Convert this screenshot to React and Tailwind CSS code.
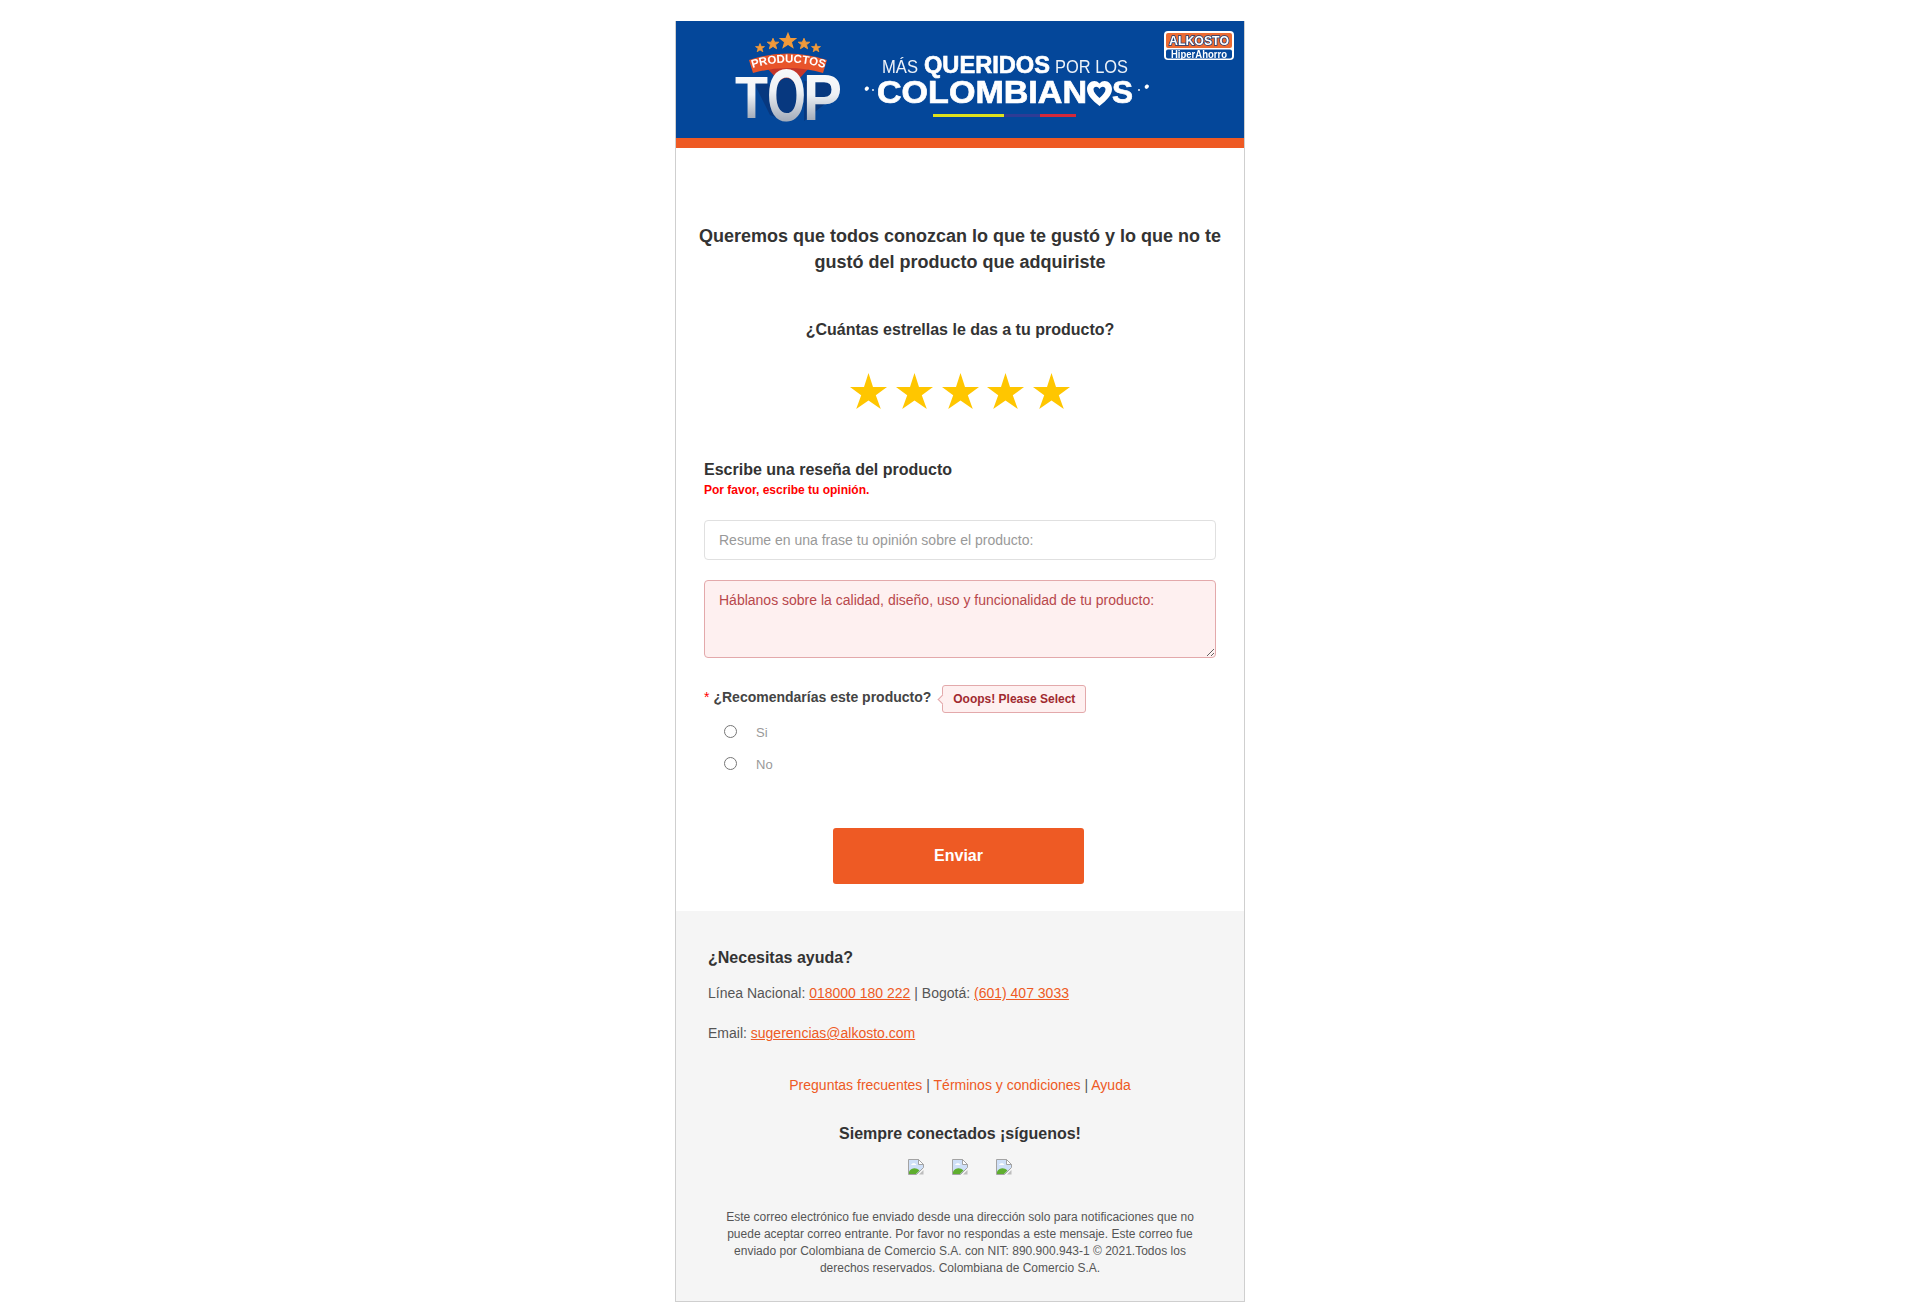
import React from "react";

const font = { fontFamily: "'Liberation Sans', Arial, sans-serif" };

function Star() {
  return (
    <svg viewBox="0 0 37 36" className="w-[37px] h-[36px]" fill="#ffc600">
      <polygon points="18.500,0 23,14 37,14 25.800,22.300 30.800,36 18.500,27.500 6.200,36 11.200,22.300 0,14 14,14" />
    </svg>
  );
}

// chrome's broken image glyph
function BrokenImage() {
  return (
    <svg viewBox="0 0 16 16" className="w-4 h-4">
      <path d="M0.5 0.5H10.5L15.5 5.5V8.500L8.500 15.5H0.5Z" fill="#cfe0f8" stroke="#a3a3a3" />
      <path d="M10.5 0.5V5.5H15.5Z" fill="#fff" stroke="#a3a3a3" />
      <path d="M3 6C4 3.500 7.500 3.500 8.500 6Z" fill="#fff" />
      <path d="M1 15V12.500C4 8.500 8 8.500 11.500 11.500L8 15Z" fill="#5fae2e" />
      <path d="M15.5 11V15.5H11Z" fill="#bdbdbd" />
    </svg>
  );
}

function BannerArt() {
  const textFont = "'Liberation Sans', Arial, sans-serif";
  const smallStar = "0,-6 1.7,-1.9 6,-1.9 2.6,0.8 3.8,5 0,2.5 -3.8,5 -2.6,0.8 -6,-1.9 -1.7,-1.9";
  return (
    <svg viewBox="0 0 568 116" className="w-full h-[116px] block" style={{ filter: "blur(0.45px)" }}>
      <defs>
        <linearGradient id="top" x1="0" y1="0" x2="0" y2="1">
          <stop offset="0" stopColor="#ffffff" />
          <stop offset="0.45" stopColor="#eef1f5" />
          <stop offset="0.8" stopColor="#a4adbb" />
          <stop offset="1" stopColor="#d8dde5" />
        </linearGradient>
        <path id="arc" d="M77 47Q112 36 148 47" />
      </defs>

      {/* productos top logo */}
      {[
        [84, 27, 0.75],
        [97, 23, 0.95],
        [112, 20, 1.25],
        [128, 23, 0.95],
        [140, 27, 0.75],
      ].map(([x, y, s], i) => (
        <polygon key={i} points={smallStar} fill="#f29a3a" stroke="#f29a3a" strokeWidth="1" transform={`translate(${x} ${y}) scale(${s})`} />
      ))}
      <path d="M90 46H134L112 70Z" fill="#c4362a" />
      <path d="M73 39Q112 26 151 39L147 52Q112 42 77 52Z" fill="#e8542a" />
      <text fontFamily={textFont} fontWeight="700" fontSize="11.5" fill="#fff">
        <textPath href="#arc" startOffset="50%" textAnchor="middle">
          PRODUCTOS
        </textPath>
      </text>
      <path d="M78 62H92L112 100L94 94Z" fill="#07387f" />
      <path d="M128 60H155V78L140 90L128 100Z" fill="#07387f" />
      <ellipse cx="110.500" cy="75" rx="12" ry="18" fill="#07387f" />
      <text x="59" y="97" fontFamily={textFont} fontWeight="700" fontSize="59" fill="url(#top)" textLength="33" lengthAdjust="spacingAndGlyphs">
        T
      </text>
      <text x="127" y="99" fontFamily={textFont} fontWeight="700" fontSize="64" fill="url(#top)" textLength="39" lengthAdjust="spacingAndGlyphs">
        P
      </text>
      <text x="91" y="100" fontFamily={textFont} fontWeight="700" fontSize="75" fill="url(#top)" textLength="39" lengthAdjust="spacingAndGlyphs">
        O
      </text>

      {/* headline */}
      <text x="206" y="52" fontFamily={textFont} fontSize="18" fill="#eef2f8" textLength="36" lengthAdjust="spacingAndGlyphs">
        MÁS
      </text>
      <text x="248" y="52" fontFamily={textFont} fontWeight="700" fontSize="23" fill="#fff" stroke="#fff" strokeWidth="0.6" textLength="126" lengthAdjust="spacingAndGlyphs">
        QUERIDOS
      </text>
      <text x="379" y="52" fontFamily={textFont} fontSize="18" fill="#eef2f8" textLength="73" lengthAdjust="spacingAndGlyphs">
        POR LOS
      </text>
      <text x="201" y="82" fontFamily={textFont} fontWeight="700" fontSize="32" fill="#fff" stroke="#fff" strokeWidth="0.7" textLength="210" lengthAdjust="spacingAndGlyphs">
        COLOMBIAN
      </text>
      <path
        d="M423.500 85C416 79 411 74 411 68C411 61 419 57 423.500 62.500C428 57 436 61 436 68C436 74 431 79 423.500 85ZM423.500 77C427 74 429.500 71 429.500 68.500C429.500 65.500 425.500 64.500 423.500 68C421.500 64.500 417.500 65.500 417.500 68.500C417.500 71 420 74 423.500 77Z"
        fill="#fff"
        fillRule="evenodd"
      />
      <text x="436" y="82" fontFamily={textFont} fontWeight="700" fontSize="32" fill="#fff" stroke="#fff" strokeWidth="0.7" textLength="21" lengthAdjust="spacingAndGlyphs">
        S
      </text>
      <path d="M189 67C190 65 192 65 193 67C193 69 191 70 190 70C189 69 188 68 189 67Z" fill="#fff" />
      <circle cx="197" cy="69" r="0.9" fill="#fff" />
      <path d="M469 65C470 63 472 63 473 65C473 67 471 68 470 68C469 67 468 66 469 65Z" fill="#fff" />
      <circle cx="463" cy="69" r="0.9" fill="#fff" />
      <rect x="257" y="93" width="71" height="3" fill="#dfe21c" />
      <rect x="328" y="93" width="36" height="3" fill="#2f3c95" />
      <rect x="364" y="93" width="36" height="3" fill="#d4283a" />

      {/* alkosto badge */}
      <rect x="488" y="10" width="70" height="29" rx="4" fill="#fff" />
      <rect x="490" y="12" width="66" height="15" rx="2" fill="#ec6a32" />
      <rect x="490" y="28.500" width="66" height="9" rx="2" fill="#04479a" />
      <text x="523" y="24" textAnchor="middle" fontFamily={textFont} fontWeight="700" fontSize="12" fill="#fff" stroke="#123a78" strokeWidth="1.4" paintOrder="stroke" textLength="60" lengthAdjust="spacingAndGlyphs">
        ALKOSTO
      </text>
      <text x="523" y="36.500" textAnchor="middle" fontFamily={textFont} fontWeight="700" fontSize="10.500" fill="#fff" textLength="56" lengthAdjust="spacingAndGlyphs">
        HiperAhorro
      </text>
    </svg>
  );
}

export default function App() {
  return (
    <div className="min-h-screen bg-white text-[#333] flex justify-center pt-[21px]" style={font}>
      <div className="w-[570px] h-[1281px] border-x border-b border-[#cfcfcf] flex flex-col">
        {/* Banner */}
        <div className="h-[127px] bg-[#04479a] border-b-[10px] border-[#ee5a24] box-border shrink-0">
          <BannerArt />
        </div>

        {/* Review form */}
        <div className="flex-1 px-[28px] pt-[75px]">
          <h1 className="text-[18px] leading-[26px] font-bold text-center -mx-[6px]">
            Queremos que todos conozcan lo que te gustó y lo que no te gustó del producto que adquiriste
          </h1>
          <p className="mt-[43px] text-[16px] leading-[24px] font-bold text-center">
            ¿Cuántas estrellas le das a tu producto?
          </p>
          <div className="mt-[31px] flex justify-center gap-[8.750px]">
            <Star />
            <Star />
            <Star />
            <Star />
            <Star />
          </div>

          <h2 className="mt-[51px] text-[16px] leading-[20px] font-bold">Escribe una reseña del producto</h2>
          <p className="mt-[1px] text-[12px] leading-[18px] font-bold text-[#ff0000]">
            Por favor, escribe tu opinión.
          </p>

          <input
            placeholder="Resume en una frase tu opinión sobre el producto:"
            className="mt-[21px] block w-full h-[40px] px-[14px] bg-white border border-[#e0e0e0] rounded-[4px] text-[14px] placeholder:text-[#999] outline-none"
          />
          <textarea
            placeholder="Háblanos sobre la calidad, diseño, uso y funcionalidad de tu producto:"
            className="mt-[20px] block w-full h-[78px] px-[14px] py-[9px] bg-[#fef0f0] border border-[#e3a9ab] rounded-[4px] text-[14px] leading-[20px] placeholder:text-[#b8474b] outline-none"
          />

          <div className="mt-[27px] flex items-center h-[28px]">
            <span className="mb-[3px] text-[14px] font-bold text-[#444]">
              <span className="text-[#ff0000] font-normal mr-[4px]">*</span>¿Recomendarías este producto?
            </span>
            <div className="relative ml-[11px] h-[28px] px-[10px] flex items-center bg-[#fef0f0] border border-[#e3a9ab] rounded-[3px] text-[12px] font-bold text-[#a12a2f]">
              <span className="absolute -left-[4px] top-[10px] w-[7px] h-[7px] bg-[#fef0f0] border-l border-b border-[#e3a9ab] rotate-45" />
              Ooops! Please Select
            </div>
          </div>

          <div className="mt-[11px] pl-[20px] flex flex-col gap-[16px] text-[13px] text-[#999]">
            <label className="flex items-center h-[16px]">
              <input type="radio" name="rec" className="w-[13px] h-[13px] m-0 -translate-y-[1px]" />
              <span className="ml-[19px] translate-y-[1px]">Si</span>
            </label>
            <label className="flex items-center h-[16px]">
              <input type="radio" name="rec" className="w-[13px] h-[13px] m-0 -translate-y-[1px]" />
              <span className="ml-[19px] translate-y-[1px]">No</span>
            </label>
          </div>

          <div className="mt-[56px] flex justify-center pr-[3px]">
            <button className="w-[251px] h-[56px] bg-[#ee5a24] text-white text-[16px] font-bold rounded-[3px]">
              Enviar
            </button>
          </div>
        </div>

        {/* Footer */}
        <div className="h-[390px] shrink-0 bg-[#f5f5f5] px-[32px] pt-[36px]">
          <h3 className="text-[16px] leading-[22px] font-bold">¿Necesitas ayuda?</h3>
          <p className="mt-[14px] text-[14px] leading-[20px] text-[#555]">
            Línea Nacional: <a className="text-[#ee5a24] underline">018000 180 222</a> | Bogotá:{" "}
            <a className="text-[#ee5a24] underline">(601) 407 3033</a>
          </p>
          <p className="mt-[20px] text-[14px] leading-[20px] text-[#555]">
            Email: <a className="text-[#ee5a24] underline">sugerencias@alkosto.com</a>
          </p>
          <p className="mt-[32px] text-[14px] leading-[20px] text-center text-[#555]">
            <a className="text-[#ee5a24]">Preguntas frecuentes</a> | <a className="text-[#ee5a24]">Términos y condiciones</a> |{" "}
            <a className="text-[#ee5a24]">Ayuda</a>
          </p>
          <p className="mt-[28px] text-[16px] leading-[22px] font-bold text-center">Siempre conectados ¡síguenos!</p>
          <div className="mt-[14px] flex justify-center gap-[28px]">
            <BrokenImage />
            <BrokenImage />
            <BrokenImage />
          </div>
          <p className="mt-[34px] text-[12px] leading-[17px] text-center text-[#555] px-[14px]">
            Este correo electrónico fue enviado desde una dirección solo para notificaciones que no puede aceptar correo entrante. Por favor no respondas a este mensaje. Este correo fue enviado por Colombiana de Comercio S.A. con NIT: 890.900.943-1 © 2021.Todos los derechos reservados. Colombiana de Comercio S.A.
          </p>
        </div>
      </div>
    </div>
  );
}
